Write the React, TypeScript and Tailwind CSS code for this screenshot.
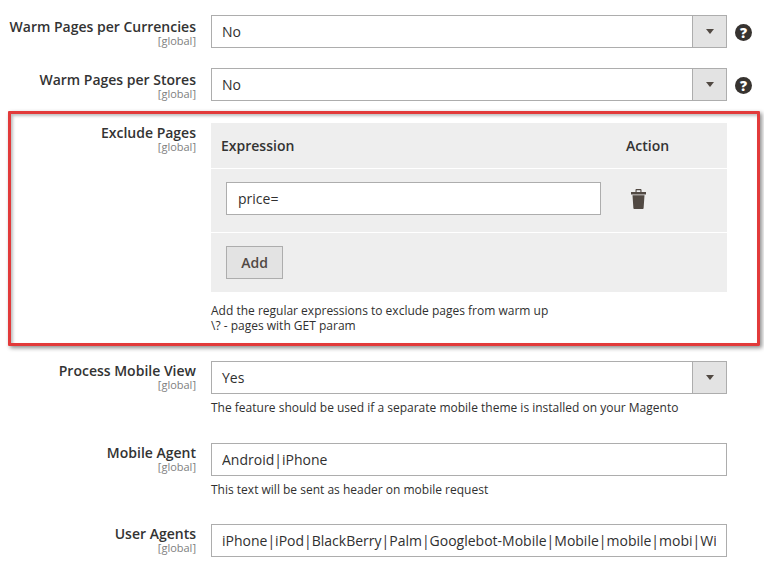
import type { ReactNode } from 'react'

function Label({ title, top = false }: { title: string; top?: boolean }) {
  return (
    <div className={top ? 'w-[196px] mr-[1px] shrink-0 text-right pt-[2px]' : 'w-[196px] mr-[1px] shrink-0 text-right'}>
      <div className="text-[14px] leading-[19px] font-[580] text-[#333333]">{title}</div>
      <div className="mt-[-1px] text-[11px] leading-[12px] text-[#808080]">[global]</div>
    </div>
  )
}

function Select({ value }: { value: string }) {
  return (
    <div className="flex h-[33px] w-[516px] border border-[#adadad] bg-white">
      <div className="flex-1 pl-[10px] text-[14px] leading-[31px] text-[#303030]">{value}</div>
      <div className="flex w-[34px] items-center justify-center border-l border-[#adadad] bg-[#e3e3e3]">
        <div className="h-0 w-0 border-x-[4px] border-t-[5px] border-x-transparent border-t-[#514943]" />
      </div>
    </div>
  )
}

function TextInput({ value }: { value: string }) {
  return (
    <div className="h-[33px] w-[516px] overflow-hidden whitespace-nowrap border border-[#adadad] bg-white px-[10px]">
      <div className="w-full overflow-hidden text-[14px] leading-[31px] text-[#303030]">{value}</div>
    </div>
  )
}

function HelpIcon() {
  return (
    <div className="ml-[-6px] mt-[9px] flex h-[17px] w-[17px] items-center justify-center rounded-full bg-[#373330] text-[14px] font-extrabold leading-none text-white">
      ?
    </div>
  )
}

function Note({ children }: { children: ReactNode }) {
  return <div className="text-[12px] leading-[15px] text-[#303030]">{children}</div>
}

function TrashIcon() {
  return (
    <svg width="15" height="20" viewBox="0 0 15 20" fill="#514943" className="block">
      <path d="M4.500 3V1C4.500.4 5 0 5.500 0h4c.5 0 1 .4 1 1v2H9.400V1.200H5.600V3z" />
      <path d="M0 3h15v2.500H0z" />
      <path d="M1.500 6.300h12L12.600 19.200c0 .5-.4.8-.8.8H3.200c-.4 0-.8-.3-.8-.8z" />
    </svg>
  )
}

export default function App() {
  return (
    <div className="relative h-[563px] w-[764px] overflow-hidden bg-white pt-[15px] font-['Open_Sans',sans-serif]">
      <div className="flex gap-[14px]">
        <Label title="Warm Pages per Currencies" top />
        <Select value="No" />
        <HelpIcon />
      </div>

      <div className="mt-[20px] flex gap-[14px]">
        <Label title="Warm Pages per Stores" top />
        <Select value="No" />
        <HelpIcon />
      </div>

      <div className="mt-[22px] flex gap-[14px]">
        <Label title="Exclude Pages" />
        <div className="w-[516px]">
          <div className="bg-[#eeeeee]">
            <div className="flex h-[46px] border-b border-white text-[14px] font-[580] leading-[45px] text-[#333333]">
              <div className="w-[415px] pl-[10px]">Expression</div>
              <div>Action</div>
            </div>
            <div className="flex h-[64px] items-start border-b border-white pl-[15px] pt-[13px]">
              <div className="h-[33px] w-[375px] border border-[#adadad] bg-white pl-[11px] text-[14px] leading-[31px] text-[#303030]">
                price=
              </div>
              <div className="ml-[30px] mt-[7px]">
                <TrashIcon />
              </div>
            </div>
            <div className="flex h-[59px] items-start pl-[15px] pt-[13px]">
              <div className="flex h-[33px] w-[57px] items-center justify-center border border-[#adadad] bg-[#e3e3e3] text-[14px] font-[580] text-[#514943]">
                Add
              </div>
            </div>
          </div>
          <div className="mt-[11px]">
            <Note>Add the regular expressions to exclude pages from warm up</Note>
            <Note>\? - pages with GET param</Note>
          </div>
        </div>
      </div>

      <div className="mt-[28px] flex gap-[14px]">
        <Label title="Process Mobile View" />
        <div>
          <Select value="Yes" />
          <div className="mt-[6px]">
            <Note>The feature should be used if a separate mobile theme is installed on your Magento</Note>
          </div>
        </div>
      </div>

      <div className="mt-[28px] flex gap-[14px]">
        <Label title="Mobile Agent" />
        <div>
          <TextInput value="Android|iPhone" />
          <div className="mt-[6px]">
            <Note>This text will be sent as header on mobile request</Note>
          </div>
        </div>
      </div>

      <div className="mt-[27px] flex gap-[14px]">
        <Label title="User Agents" />
        <TextInput value="iPhone|iPod|BlackBerry|Palm|Googlebot-Mobile|Mobile|mobile|mobi|Windows Mobile|Safari Mobile|Android|Opera Mini" />
      </div>

      {/* red annotation frame drawn over the form */}
      <div className="pointer-events-none absolute left-[8px] top-[111px] h-[235px] w-[752px] rounded-[1px] border-[3px] border-[#e23a3a] shadow-[2px_2px_4px_rgba(0,0,0,0.45),inset_2px_2px_3px_rgba(0,0,0,0.25)]" />
    </div>
  )
}
